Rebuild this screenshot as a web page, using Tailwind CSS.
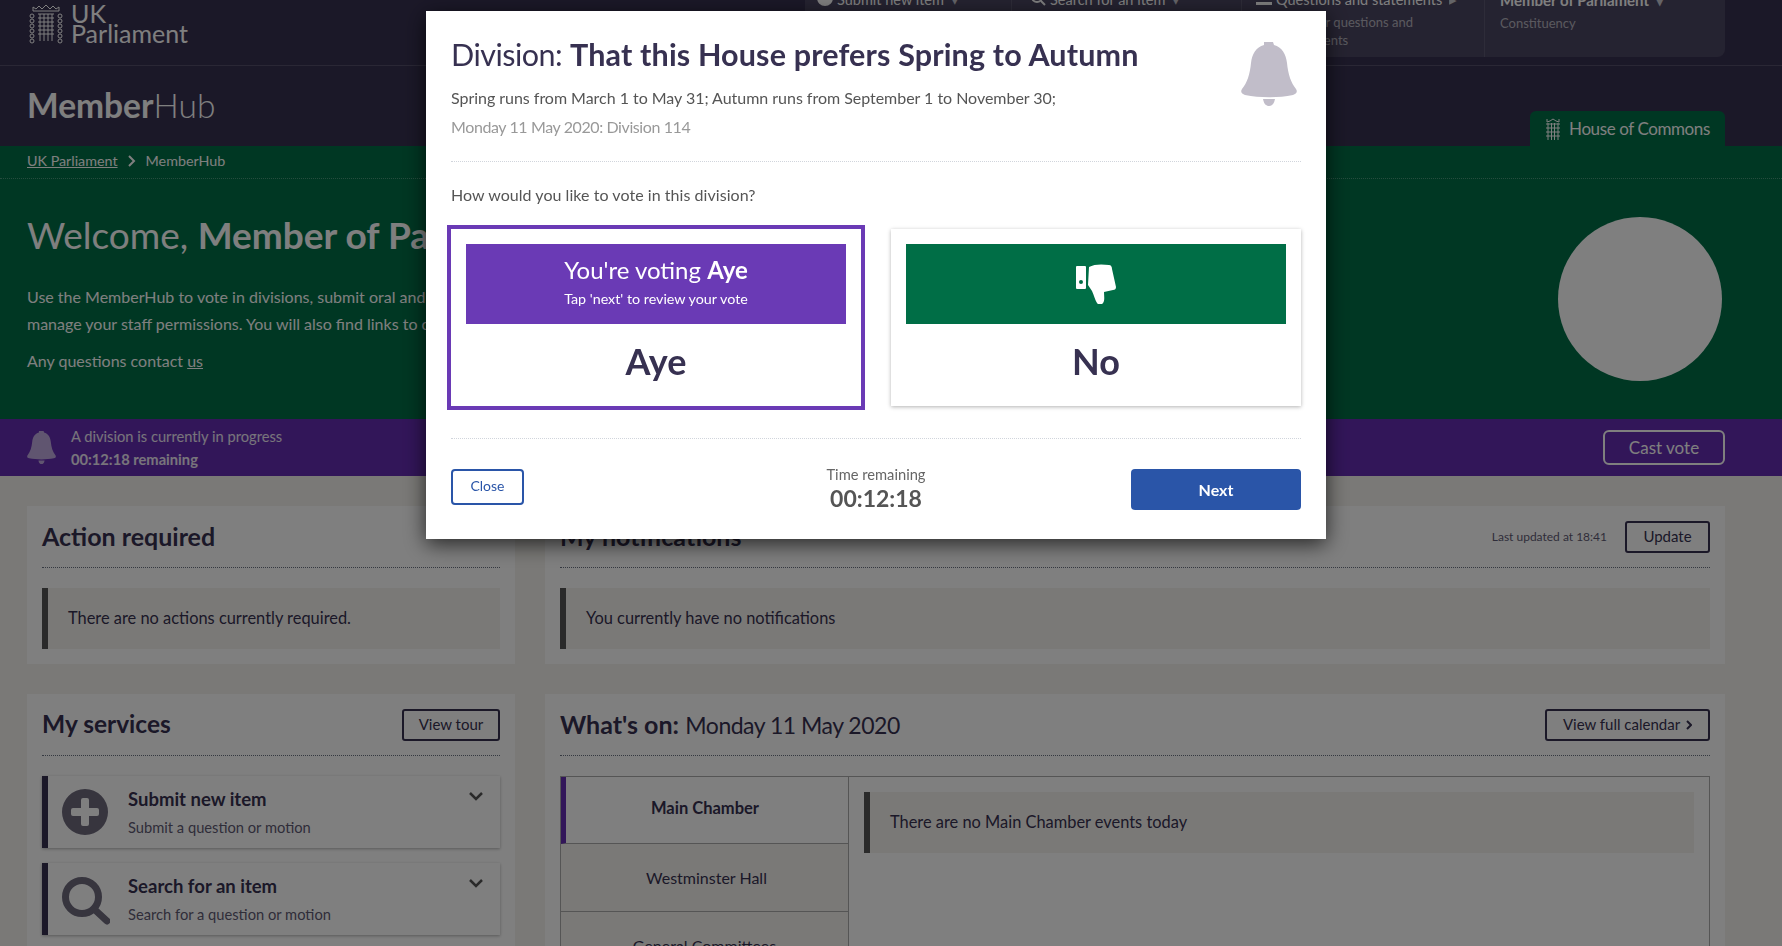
<!DOCTYPE html>
<html lang="en">
<head>
  <meta charset="UTF-8">
  <title>MemberHub</title>
  <script src="https://cdn.jsdelivr.net/npm/@tailwindcss/browser@4"></script>
</head>
<body class="h-[946px] overflow-hidden bg-[#f5f3ee] font-['Lato',sans-serif] text-[#373151]">

  <!-- Header -->
  <header class="h-[146px] bg-[#373151] text-white">
    <div class="flex h-[66px] justify-between border-b border-white/15 pl-[29px] pr-[57px]">
      <div class="flex h-[45px] items-start gap-[8px] pt-[3px]">
        <svg width="34" height="40" viewBox="0 0 34 40" fill="none" stroke="#fff" stroke-width="1" class="mt-[1px]">
          <path d="M4 7V3l3 2 3-3 3 3 4-4 4 4 3-3 3 3 3-2v4z" />
          <path d="M9 10h16M9 14h16M9 18h16M9 22h16M9 26h16M9 30h16M11 10v27M15 10v27M19 10v27M23 10v27" />
          <circle cx="3" cy="12" r="2" /><circle cx="3" cy="17" r="2" /><circle cx="3" cy="22" r="2" /><circle cx="3" cy="27" r="2" /><circle cx="3" cy="32" r="2" /><circle cx="3" cy="37" r="2" />
          <circle cx="31" cy="12" r="2" /><circle cx="31" cy="17" r="2" /><circle cx="31" cy="22" r="2" /><circle cx="31" cy="27" r="2" /><circle cx="31" cy="32" r="2" /><circle cx="31" cy="37" r="2" />
        </svg>
        <div class="text-[25px] leading-[20px]">UK<br>Parliament</div>
      </div>
      <nav class="-mt-[26px] flex h-[83px] w-[920px] rounded-lg bg-white/10 text-[14.5px]">
        <div class="flex w-[206px] gap-[4px] pl-[12px] pt-[15px]">
          <svg width="16" height="16" viewBox="0 0 16 16" fill="#fff" class="mt-[1px]"><circle cx="8" cy="8" r="8" /></svg>
          <span>Submit new item <span class="ml-[3px] opacity-70">▾</span></span>
        </div>
        <div class="flex w-[230px] gap-[4px] border-l border-white/10 pl-[18px] pt-[15px]">
          <svg width="16" height="16" viewBox="0 0 16 16" fill="none" stroke="#fff" stroke-width="2" class="mt-[1px]"><circle cx="7" cy="7" r="5" /><path d="M11 11l4 4" /></svg>
          <span>Search for an item <span class="ml-[3px] opacity-70">▾</span></span>
        </div>
        <div class="w-[243px] border-l border-white/10 pl-[14px] pt-[15px]">
          <div class="flex gap-[4px]">
            <svg width="16" height="16" viewBox="0 0 16 16" fill="#fff" class="mt-[1px]"><path d="M0 2h16v3H0zM0 7h16v3H0zM0 12h16v3H0z" /></svg>
            <span>Questions and statements <span class="ml-[3px] opacity-70">▸</span></span>
          </div>
          <div class="mt-[2px] pl-[29px] text-[13px] leading-[18px] text-white/60">Table or questions and<br>statements</div>
        </div>
        <div class="flex-1 border-l border-white/10 pl-[15px] pt-[15px]">
          <div class="text-[15px] font-bold">Member of Parliament <span class="ml-[3px] opacity-70">▾</span></div>
          <div class="mt-[2px] text-[13px] text-white/60">Constituency</div>
        </div>
      </nav>
    </div>
    <div class="flex h-[80px] items-end justify-between pl-[27px] pr-[57px]">
      <div class="mb-[21px] text-[33.500px] leading-[40px]"><b>Member</b><span class="font-light">Hub</span></div>
      <div class="flex h-[35px] w-[195px] items-center justify-center gap-[8px] rounded-t-md bg-[#006e46] text-[17px]">
        <svg width="16" height="22" viewBox="0 0 16 22" fill="none" stroke="#fff"><path d="M2 1v3l3-1 3-2 3 2 3 1V1M1 6h14M1 10h14M1 14h14M1 18h14M3 5v17M6.500 5v17M9.500 5v17M13 5v17" /></svg>
        <span class="tracking-[-0.4px]">House of Commons</span>
      </div>
    </div>
  </header>

  <!-- Green welcome band -->
  <section class="h-[273px] bg-[#006e46] text-white">
    <div class="flex h-[33px] items-center gap-[10px] border-b border-dotted border-white/30 pb-[3px] pl-[27px] text-[14.300px]">
      <a class="underline">UK Parliament</a>
      <svg width="8" height="12" viewBox="0 0 8 12" fill="none" stroke="#fff" stroke-width="2"><path d="M1 1l5 5-5 5" /></svg>
      <span>MemberHub</span>
    </div>
    <div class="flex justify-between pl-[27px] pr-[60px]">
      <div class="w-[900px] pt-[31px]">
        <h1 class="text-[37px] leading-[50px]">Welcome, <b>Member of Parliament</b></h1>
        <p class="mt-[23px] text-[16px] leading-[27px]">Use the MemberHub to vote in divisions, submit oral and written questions and<br>manage your staff permissions. You will also find links to other services.</p>
        <p class="mt-[10px] text-[16px] leading-[27px]">Any questions contact <a class="underline">us</a></p>
      </div>
      <div class="mt-[38px] h-[164px] w-[164px] rounded-full bg-white"></div>
    </div>
  </section>

  <!-- Division banner -->
  <section class="flex h-[57px] items-center justify-between bg-[#652cb3] pl-[27px] pr-[57px] text-white">
    <div class="flex items-center gap-[15px]">
      <svg width="29" height="33" viewBox="0 0 56 64" fill="#fff" opacity="0.6">
        <path d="M23 0h9l1 3c8 2 12 9 13 18 1 11 4 20 9 26 2 3 0 5-3 6-15 3-33 3-48 0-3-1-5-3-3-6 5-6 8-15 9-26 1-9 5-16 13-18z" />
        <path d="M22 57h12c-1 5-3 7-6 7s-5-2-6-7z" />
      </svg>
      <div class="text-[14.700px] leading-[23px]">
        <div class="text-white/90">A division is currently in progress</div>
        <div class="font-bold text-white/90">00:12:18 remaining</div>
      </div>
    </div>
    <button class="h-[35px] w-[122px] rounded-md border-2 border-white text-[17px]">Cast vote</button>
  </section>

  <!-- Main content -->
  <main class="grid grid-cols-[488px_1180px] gap-x-[30px] gap-y-[30px] pl-[27px] pt-[30px]">
    <section class="h-[158px] bg-white px-[15px]">
      <div class="flex h-[62px] items-center border-b border-dotted border-gray-500">
        <h2 class="text-[25px] font-bold">Action required</h2>
      </div>
      <div class="mt-[20px] flex h-[61px] items-center border-l-[6px] border-[#555] bg-[#f5f3ee] pl-[20px] text-[16.400px]">There are no actions currently required.</div>
    </section>

    <section class="h-[158px] bg-white px-[15px]">
      <div class="flex h-[62px] items-center justify-between border-b border-dotted border-gray-500">
        <h2 class="text-[25px] font-bold">My notifications</h2>
        <div class="flex items-center gap-[18px]">
          <span class="text-[12px] opacity-80">Last updated at 18:41</span>
          <button class="h-[32px] w-[85px] rounded-[3px] border-2 border-[#373151] text-[15px]">Update</button>
        </div>
      </div>
      <div class="mt-[20px] flex h-[61px] items-center border-l-[6px] border-[#555] bg-[#f5f3ee] pl-[20px] text-[16.400px]">You currently have no notifications</div>
    </section>

    <section class="bg-white px-[15px] pb-[20px]">
      <div class="flex h-[62px] items-center justify-between border-b border-dotted border-gray-500">
        <h2 class="text-[24.500px] font-bold">My services</h2>
        <button class="h-[32px] w-[98px] rounded-[3px] border-2 border-[#373151] text-[15px]">View tour</button>
      </div>
      <div class="mt-[20px] flex h-[72px] justify-between border-l-[6px] border-[#373151] pl-[14px] pr-[17px] shadow-[0_1px_3px_rgba(0,0,0,0.3)]">
        <div class="flex items-center gap-[20px]">
          <svg width="46" height="46" viewBox="0 0 46 46" fill="#6e6a7d"><path fill-rule="evenodd" d="M23 0a23 23 0 1 1 0 46a23 23 0 1 1 0-46zM19 11v8h-8a2 2 0 0 0-2 2v4a2 2 0 0 0 2 2h8v8a2 2 0 0 0 2 2h4a2 2 0 0 0 2-2v-8h8a2 2 0 0 0 2-2v-4a2 2 0 0 0-2-2h-8v-8a2 2 0 0 0-2-2h-4a2 2 0 0 0-2 2z" /></svg>
          <div class="-mt-[2px]">
            <div class="text-[18.500px] font-bold leading-[26px]">Submit new item</div>
            <div class="mt-[5px] text-[14.700px] leading-[20px] opacity-80">Submit a question or motion</div>
          </div>
        </div>
        <svg width="14" height="9" viewBox="0 0 14 9" fill="none" stroke="#555" stroke-width="2.500" class="mt-[16px]"><path d="M1 1l6 6 6-6" /></svg>
      </div>
      <div class="mt-[15px] flex h-[72px] justify-between border-l-[6px] border-[#373151] pl-[14px] pr-[17px] shadow-[0_1px_3px_rgba(0,0,0,0.3)]">
        <div class="flex items-center gap-[20px]">
          <svg width="48" height="48" viewBox="0 0 48 48" fill="none" stroke="#6e6a7d" class="mt-[3px]"><circle cx="20" cy="20" r="16.500" stroke-width="7" /><path d="M32 32l13 12" stroke-width="7" stroke-linecap="round" /></svg>
          <div class="-ml-[2px] -mt-[2px]">
            <div class="text-[18.500px] font-bold leading-[26px]">Search for an item</div>
            <div class="mt-[5px] text-[14.700px] leading-[20px] opacity-80">Search for a question or motion</div>
          </div>
        </div>
        <svg width="14" height="9" viewBox="0 0 14 9" fill="none" stroke="#555" stroke-width="2.500" class="mt-[16px]"><path d="M1 1l6 6 6-6" /></svg>
      </div>
    </section>

    <section class="h-[300px] bg-white px-[15px]">
      <div class="flex h-[62px] items-center justify-between border-b border-dotted border-gray-500">
        <h2 class="text-[25px]"><b>What's on:</b> <span class="text-[23px] tracking-[-0.5px]">Monday 11 May 2020</span></h2>
        <button class="flex h-[32px] w-[165px] items-center justify-center gap-[6px] rounded-[3px] border-2 border-[#373151] text-[15px]">
          View full calendar
          <svg width="6" height="10" viewBox="0 0 6 10" fill="none" stroke="#373151" stroke-width="2"><path d="M1 1l4 4-4 4" /></svg>
        </button>
      </div>
      <div class="mt-[20px] flex h-[220px] border-l border-t border-r border-[#aaa]">
        <div class="w-[288px] border-r border-[#aaa] text-[16px]">
          <div class="flex h-[67px] items-center justify-center border-b border-l-[5px] border-[#aaa] border-l-[#652cb3] pb-[4px] pr-[4px] text-[16.500px] font-bold">Main Chamber</div>
          <div class="flex h-[68px] items-center justify-center border-b border-[#aaa] bg-[#f5f3ee] pl-[4px]">Westminster Hall</div>
          <div class="flex h-[68px] items-center justify-center bg-[#f5f3ee]">General Committees</div>
        </div>
        <div class="flex-1 px-[15px] pt-[15px]">
          <div class="flex h-[61px] items-center border-l-[6px] border-[#555] bg-[#f5f3ee] pl-[20px] text-[16.400px]">There are no Main Chamber events today</div>
        </div>
      </div>
    </section>
  </main>

  <!-- Overlay -->
  <div class="fixed inset-0 bg-black/50"></div>

  <!-- Vote modal -->
  <div class="fixed left-[426px] top-[11px] h-[528px] w-[900px] bg-white px-[25px] shadow-[0_5px_20px_rgba(0,0,0,0.7)]">
    <div class="flex h-[151px] justify-between border-b border-dotted border-gray-300">
      <div class="pt-[24px]">
        <h2 class="text-[30.500px] leading-[38px]"><span class="tracking-[-0.5px]">Division:</span> <b class="tracking-[0.15px]">That this House prefers Spring to Autumn</b></h2>
        <p class="mt-[13px] text-[16px] leading-[24px] tracking-[-0.03px] text-[#555]">Spring runs from March 1 to May 31; Autumn runs from September 1 to November 30;</p>
        <p class="mt-[5px] text-[16px] leading-[24px] tracking-[-0.4px] text-[#999]">Monday 11 May 2020: Division 114</p>
      </div>
      <svg width="56" height="64" viewBox="0 0 56 64" fill="#c1bdc9" class="mr-[4px] mt-[31px]">
        <path d="M23 0h9l1 3c8 2 12 9 13 18 1 11 4 20 9 26 2 3 0 5-3 6-15 3-33 3-48 0-3-1-5-3-3-6 5-6 8-15 9-26 1-9 5-16 13-18z" />
        <path d="M22 57h12c-1 5-3 7-6 7s-5-2-6-7z" />
      </svg>
    </div>
    <p class="mt-[21px] text-[16px] leading-[24px] tracking-[0.05px] text-[#555]">How would you like to vote in this division?</p>
    <div class="-ml-[4px] mt-[18px] flex h-[185px] items-center justify-between">
      <div class="h-[185px] w-[418px] border-[4px] border-[#6a3ab5] px-[15px] pt-[15px] text-center">
        <div class="flex h-[80px] flex-col items-center justify-center bg-[#6a3ab5] pb-[5px] text-white">
          <div class="text-[24px] leading-[32px]">You're voting <b>Aye</b></div>
          <div class="mt-[3px] text-[14.300px] leading-[20px]">Tap 'next' to review your vote</div>
        </div>
        <div class="mt-[15px] text-[36px] font-bold leading-[44px]">Aye</div>
      </div>
      <div class="h-[177px] w-[410px] px-[15px] pt-[15px] text-center shadow-[0_1px_4px_rgba(0,0,0,0.3)]">
        <div class="flex h-[80px] items-center justify-center bg-[#006e46]">
          <svg width="40" height="40" viewBox="0 0 40 40" fill="#fff">
            <path fill-rule="evenodd" d="M1 2h8a1 1 0 0 1 1 1v21a1 1 0 0 1-1 1H1a1 1 0 0 1-1-1V3a1 1 0 0 1 1-1zM5 16a2 2 0 1 0 0 4a2 2 0 1 0 0-4z" />
            <path d="M13 3c5-3 13-3 20-2 2 0 3 2 3 4l4 18c0 2-1 3-3 3l-9 2c0 4 1 8-1 11-1 2-5 2-6 0-2-3-3-8-5-12l-4-6z" />
          </svg>
        </div>
        <div class="mt-[15px] text-[36px] font-bold leading-[44px]">No</div>
      </div>
    </div>
    <div class="mt-[28px] grid grid-cols-[1fr_auto_1fr] items-start border-t border-dotted border-gray-300 pt-[30px]">
      <button class="h-[36px] w-[73px] rounded-[4px] border-2 border-[#2a55a8] pb-[3px] text-[14px] text-[#2a55a8]">Close</button>
      <div class="-mt-[5px] text-center">
        <div class="text-[14.700px] leading-[20px] text-[#666]">Time remaining</div>
        <div class="-mt-[1px] text-[23px] font-bold leading-[30px] text-[#555]">00:12:18</div>
      </div>
      <button class="h-[41px] w-[170px] justify-self-end rounded-[4px] bg-[#2a55a8] text-[16px] font-bold text-white">Next</button>
    </div>
  </div>

</body>
</html>
